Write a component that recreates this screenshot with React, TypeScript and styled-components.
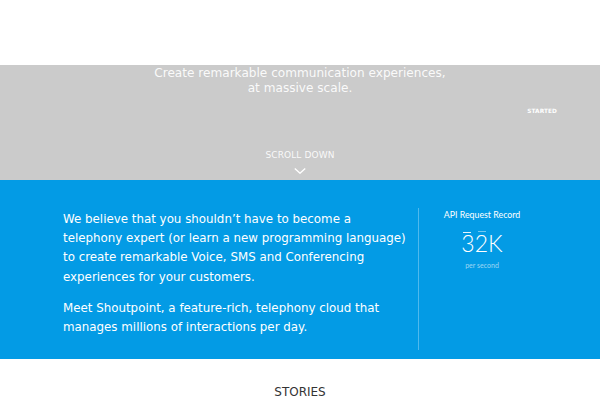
import React from "react";
import styled, { createGlobalStyle } from "styled-components";

const Global = createGlobalStyle`
  html, body { margin: 0; padding: 0; background: #ffffff; }
  body { font-family: "DejaVu Sans", Verdana, sans-serif; }
  * { box-sizing: border-box; }
`;

const Page = styled.div`
  width: 600px;
  display: flex;
  flex-direction: column;
`;

const TopBar = styled.header`
  height: 65px;
  background: #ffffff;
`;

const Hero = styled.section`
  height: 115px;
  background: #cbcbcb;
  display: flex;
  flex-direction: column;
  align-items: stretch;
  padding-top: 1px;
  padding-bottom: 6px;
`;

const HeroTitle = styled.h1`
  margin: 0;
  font-family: "DejaVu Sans", Verdana, sans-serif;
  font-weight: 400;
  font-size: 12.1px;
  line-height: 15px;
  color: rgba(255, 255, 255, 0.92);
  text-align: center;
`;

const CtaRow = styled.div`
  display: flex;
  justify-content: flex-end;
  padding-right: 43px;
  margin-top: 11px;
`;

const CtaText = styled.span`
  font-family: "DejaVu Sans", Verdana, sans-serif;
  font-weight: 700;
  font-size: 5.8px;
  line-height: 8px;
  color: #ffffff;
  letter-spacing: 0.1px;
`;

const ScrollDown = styled.div`
  margin-top: auto;
  display: flex;
  flex-direction: column;
  align-items: center;
  gap: 7px;
`;

const ScrollLabel = styled.span`
  font-family: "DejaVu Sans", Verdana, sans-serif;
  font-size: 9px;
  line-height: 11px;
  color: rgba(255, 255, 255, 0.9);
  letter-spacing: 0.1px;
`;

const Chevron = styled.svg`
  display: block;
`;

const Intro = styled.section`
  height: 179px;
  background: #039be5;
  display: flex;
  align-items: flex-start;
  padding-top: 28px;
`;

const IntroText = styled.div`
  width: 418px;
  padding: 2px 8px 0 63px;
`;

const Para = styled.p`
  margin: 0 0 12px;
  font-family: "DejaVu Sans", Verdana, sans-serif;
  font-size: 11.85px;
  line-height: 19.2px;
  color: #ffffff;
`;

const Divider = styled.div`
  width: 1px;
  height: 142px;
  background: rgba(255, 255, 255, 0.3);
`;

const Stat = styled.div`
  flex: 1;
  padding: 2px 55px 0 0;
  display: flex;
  flex-direction: column;
  align-items: center;
  font-family: Lato, "DejaVu Sans", sans-serif;
  color: #ffffff;
`;

const StatLabel = styled.span`
  font-size: 8.8px;
  line-height: 10px;
`;

const Number = styled.div`
  margin-top: 12.5px;
  display: flex;
  align-items: flex-start;
  font-family: Lato, "DejaVu Sans", sans-serif;
  font-weight: 300;
  font-size: 23px;
  line-height: 20px;
`;

const Digit = styled.span<{ $traceLeft: number; $traceTop: number; $traceOpacity: number }>`
  position: relative;
  display: block;

  &::before {
    content: "";
    position: absolute;
    left: ${(p) => p.$traceLeft}px;
    top: ${(p) => p.$traceTop}px;
    width: 8px;
    height: 1px;
    background: rgba(255, 255, 255, ${(p) => p.$traceOpacity});
  }
`;

const Suffix = styled.span`
  display: block;
`;

const StatUnit = styled.span`
  margin-top: 8px;
  font-size: 7px;
  line-height: 8.4px;
  color: rgba(255, 255, 255, 0.6);
`;

const Stories = styled.section`
  height: 41px;
  background: #ffffff;
  display: flex;
  align-items: flex-end;
  justify-content: center;
  padding-bottom: 1px;
`;

const StoriesTitle = styled.h2`
  margin: 0;
  font-family: "DejaVu Sans", Verdana, sans-serif;
  font-weight: 400;
  font-size: 12px;
  line-height: 14px;
  color: #333333;
`;

const DIGITS = [
  { value: "3", left: 1.5, top: -0.5, opacity: 0.9 },
  { value: "2", left: 3, top: -1.5, opacity: 0.45 },
];

export default function App() {
  return (
    <Page>
      <Global />
      <TopBar />
      <Hero>
        <HeroTitle>
          Create remarkable communication experiences,
          <br />
          at massive scale.
        </HeroTitle>
        <CtaRow>
          <CtaText>STARTED</CtaText>
        </CtaRow>
        <ScrollDown>
          <ScrollLabel>SCROLL DOWN</ScrollLabel>
          <Chevron width="12" height="6" viewBox="0 0 12 6" fill="none">
            <path d="M0.8 0.6 L6 5.2 L11.2 0.6" stroke="#ffffff" strokeWidth="1.4" />
          </Chevron>
        </ScrollDown>
      </Hero>
      <Intro>
        <IntroText>
          <Para>
            We believe that you shouldn’t have to become a telephony expert (or learn a new programming
            language) to create remarkable Voice, SMS and Conferencing experiences for your customers.
          </Para>
          <Para>
            Meet Shoutpoint, a feature-rich, telephony cloud that manages millions of interactions per day.
          </Para>
        </IntroText>
        <Divider />
        <Stat>
          <StatLabel>API Request Record</StatLabel>
          <Number>
            {DIGITS.map((d, i) => (
              <Digit key={i} $traceLeft={d.left} $traceTop={d.top} $traceOpacity={d.opacity}>
                {d.value}
              </Digit>
            ))}
            <Suffix>K</Suffix>
          </Number>
          <StatUnit>per second</StatUnit>
        </Stat>
      </Intro>
      <Stories>
        <StoriesTitle>STORIES</StoriesTitle>
      </Stories>
    </Page>
  );
}
